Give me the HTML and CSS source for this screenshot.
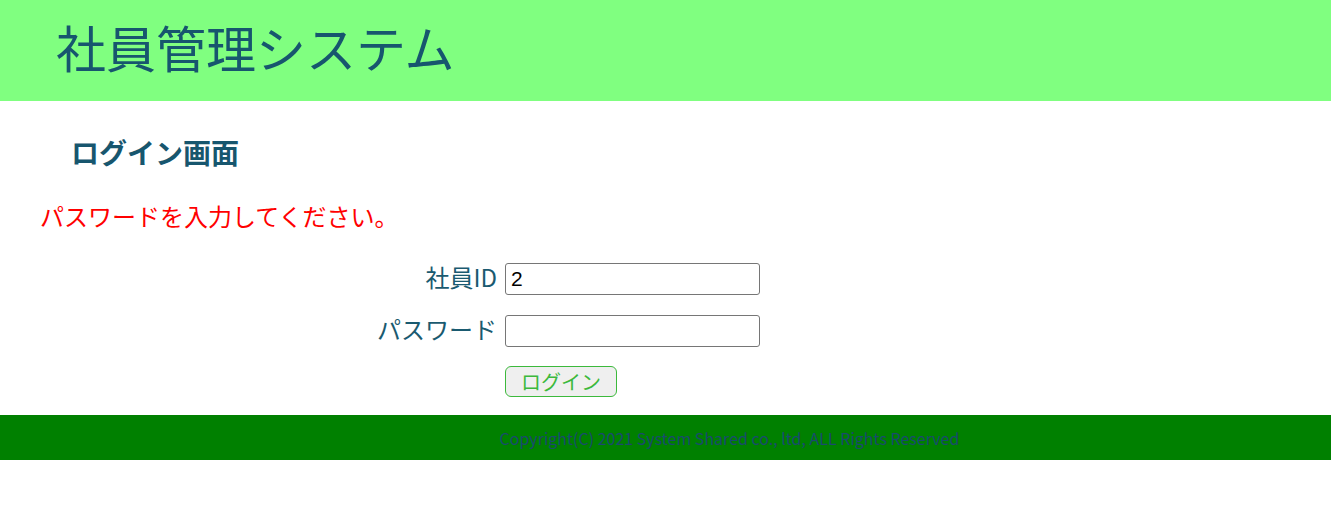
FILE: index.html
```html
<!DOCTYPE html>
<html lang="ja">
<head>
<meta charset="utf-8">
<title>社員管理システム</title>
<link rel="stylesheet" href="styles.css">
</head>
<body>
<header class="site-header">
  <h1 class="site-title">社員管理システム</h1>
</header>
<main class="main">
  <h2 class="page-title">ログイン画面</h2>
  <p class="error">パスワードを入力してください。</p>
  <form class="login-form">
    <div class="row">
      <label class="label" for="eid">社員ID</label>
      <input class="input" id="eid" type="text" value="2">
    </div>
    <div class="row">
      <label class="label" for="pw">パスワード</label>
      <input class="input" id="pw" type="password">
    </div>
    <div class="row row-btn">
      <span class="label"></span>
      <button class="btn" type="button">ログイン</button>
    </div>
  </form>
</main>
<footer class="site-footer">
  <p class="copy">Copyright(C) 2021 System Shared co., ltd, ALL Rights Reserved</p>
</footer>
</body>
</html>
```
FILE: styles.css
```css
body {
  margin: 0;
  font-family: "Noto Sans CJK JP", "Noto Sans", sans-serif;
  color: #1a5a70;
  background: #fff;
}
.site-header {
  background: #80ff80;
  height: 101px;
  box-sizing: border-box;
  padding: 16px 0 0 56px;
}
.site-title {
  margin: 0;
  font-size: 50px;
  font-weight: 400;
  line-height: 60px;
  color: #17566e;
}
.page-title {
  margin: 0;
  padding: 31px 0 0 71px;
  font-size: 28px;
  font-weight: 700;
  line-height: 40px;
  color: #17566e;
}
.error {
  margin: 0;
  padding: 26px 0 0 40px;
  font-size: 24px;
  line-height: 36px;
  color: #ff0000;
}
.login-form {
  display: flex;
  flex-direction: column;
  gap: 20px;
  padding-top: 29px;
}
.row {
  display: flex;
  align-items: center;
  gap: 8px;
}
.row-btn {
  margin-top: -1px;
}
.label {
  width: 497px;
  text-align: right;
  font-size: 24px;
  line-height: 27px;
  padding-bottom: 5px;
  color: #1a5a70;
}
.row-btn .label {
  padding-bottom: 0;
}
.input {
  box-sizing: border-box;
  width: 255px;
  height: 32px;
  margin: 0;
  border: 1px solid #767676;
  border-radius: 3px;
  padding: 2px 5px;
  font-family: "Liberation Sans", Arial, sans-serif;
  font-size: 21px;
  color: #000;
}
.btn {
  box-sizing: border-box;
  width: 112px;
  height: 31px;
  margin: 0;
  padding: 0;
  border: 1px solid #3cb93c;
  border-radius: 6px;
  background: #efefef;
  font-family: "Noto Sans CJK JP", sans-serif;
  font-size: 20px;
  line-height: 1;
  color: #3cb93c;
}
.site-footer {
  margin-top: 18px;
  background: #008000;
  height: 45px;
  display: flex;
  align-items: center;
  justify-content: center;
  padding-left: 128px;
}
.copy {
  margin: 0;
  font-size: 16px;
  color: #1a4a6e;
}
```
